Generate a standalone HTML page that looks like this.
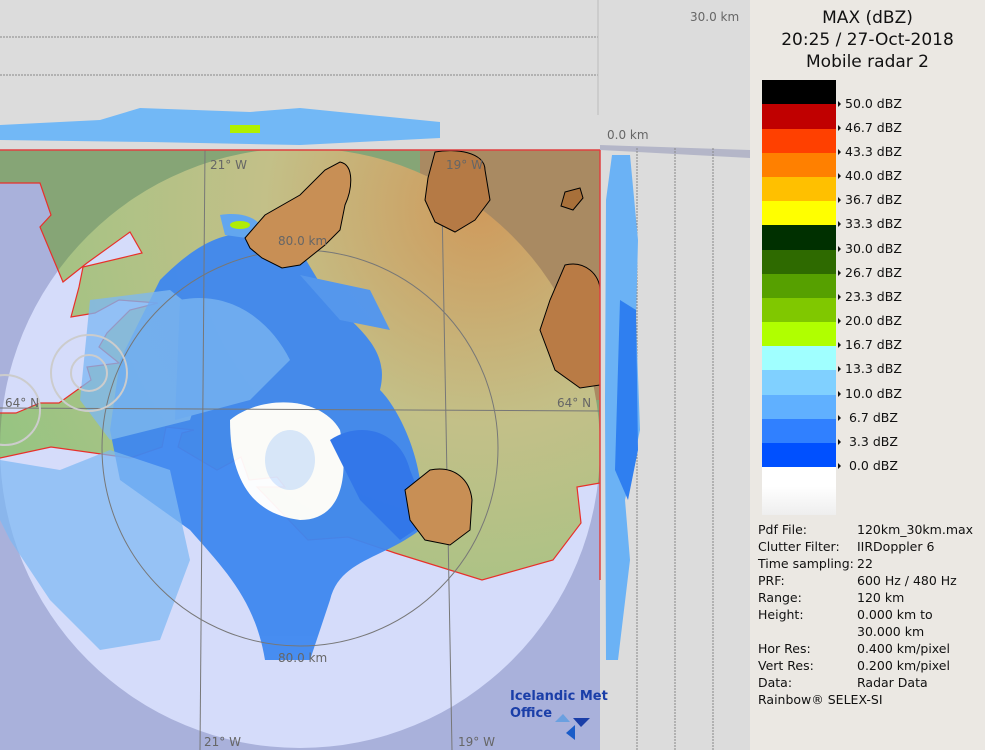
<!DOCTYPE html>
<html><head><style>
body{margin:0;width:985px;height:750px;overflow:hidden;background:#ebe8e2;font-family:"DejaVu Sans","Liberation Sans",sans-serif;position:relative}
.lg{position:absolute;left:750px;top:0;width:235px;height:750px;background:#ebe8e3;color:#111}
.title{position:absolute;left:0;width:235px;text-align:center;font-size:17px;line-height:22px;top:7px}
.bar{position:absolute;left:12px;width:74px}
.lab{position:absolute;left:95px;font-size:12.5px;white-space:pre}
.lab:before{content:"";position:absolute;left:-7px;top:5px;border-left:3px solid #111;border-top:3px solid transparent;border-bottom:3px solid transparent}
.inf{position:absolute;left:8px;font-size:12.5px;line-height:17px;top:521px}
.inf div{height:17px;white-space:nowrap}
.inf span{position:absolute;left:99px}
</style></head><body>
<svg width="750" height="750" style="position:absolute;left:0;top:0">
<defs>
<clipPath id="mr"><rect x="0" y="150" width="600" height="600"/></clipPath>
<clipPath id="land"><polygon id="lp" points="0,150 600,150 600,483 577,487 581,523 553,560 482,580 395,553 348,537 308,540 257,487 285,487 277,477 249,480 241,457 217,470 178,447 182,433 194,430 166,427 162,447 130,458 51,447 0,458 0,413 16,413 40,403 59,403 91,380 87,367 119,363 99,347 107,333 130,310 158,303 119,300 95,313 71,317 79,287 83,267 142,253 130,232 87,263 63,282 40,227 51,215 40,183 0,183"/></clipPath>
<radialGradient id="lg1" cx="0.8" cy="0.1" r="0.9"><stop offset="0" stop-color="#cf9a5c"/><stop offset="0.4" stop-color="#c3c088"/><stop offset="1" stop-color="#95c482"/></radialGradient>
</defs>
<rect width="750" height="750" fill="#a9b1db"/>
<rect x="0" y="0" width="600" height="150" fill="#dcdcdc"/>
<line x1="0" y1="37" x2="598" y2="37" stroke="#888" stroke-dasharray="2,1"/>
<line x1="0" y1="75" x2="598" y2="75" stroke="#888" stroke-dasharray="2,1"/>
<line x1="598" y1="0" x2="598" y2="115" stroke="#bbb"/>
<rect x="600" y="0" width="150" height="750" fill="#dcdcdc"/>
<polygon points="600,145 750,150 750,158 600,150" fill="#b4b6c8"/>
<line x1="637" y1="148" x2="637" y2="750" stroke="#888" stroke-dasharray="2,1"/>
<line x1="675" y1="148" x2="675" y2="750" stroke="#888" stroke-dasharray="2,1"/>
<line x1="713" y1="148" x2="713" y2="750" stroke="#888" stroke-dasharray="2,1"/>
<g clip-path="url(#mr)">
<rect x="0" y="150" width="600" height="600" fill="#a9b1db"/>
<circle cx="300" cy="448" r="300" fill="#d5dcfa"/>
<g clip-path="url(#land)">
<rect x="0" y="150" width="600" height="450" fill="#86a576"/>
<rect x="420" y="150" width="180" height="250" fill="#a98a62"/>
<circle cx="300" cy="448" r="300" fill="url(#lg1)"/>
</g>
<polyline points="600,483 577,487 581,523 553,560 482,580 395,553 348,537 308,540 257,487 285,487 277,477 249,480 241,457 217,470 178,447 182,433 194,430 166,427 162,447 130,458 51,447 0,458" fill="none" stroke="#e8302a" stroke-width="1.2"/>
<polyline points="0,413 16,413 40,403 59,403 91,380 87,367 119,363 99,347 107,333 130,310 158,303 119,300 95,313 71,317 79,287 83,267 142,253 130,232 87,263 63,282 40,227 51,215 40,183 0,183" fill="none" stroke="#e8302a" stroke-width="1.2"/>
<g opacity="0.95">
<path d="M160,280 C200,240 240,215 300,250 L330,300 C360,330 390,350 380,390 C400,410 430,470 420,530 C380,560 340,560 330,600 L310,660 L265,660 C255,600 225,570 190,530 L120,480 L110,430 L120,360Z" fill="#3f88f0"/>
<path d="M90,300 L170,290 L220,330 L190,420 L110,440 L80,400Z" fill="#7db8f4" opacity="0.8"/>
<path d="M180,300 C230,290 270,320 290,360 L250,400 L175,420 Z" fill="#6aaaf5"/>
<path d="M230,420 C260,395 320,395 340,430 C350,480 340,520 300,520 C260,515 230,490 230,420Z" fill="#ffffff"/>
<ellipse cx="290" cy="460" rx="25" ry="30" fill="#d9e9ff"/>
<path d="M0,460 L60,470 L110,450 L170,470 L190,560 L160,640 L100,650 L50,600 L10,540 L0,520Z" fill="#7eb8f3" opacity="0.75"/>
<path d="M330,440 C360,420 400,430 410,470 L430,520 L400,540 L360,500Z" fill="#2c74ef"/>
<path d="M300,275 L370,290 L390,330 L340,320Z" fill="#5096f2"/>
<path d="M220,215 C250,210 270,225 260,240 L225,235Z" fill="#5ea5f5"/>
<ellipse cx="240" cy="225" rx="10" ry="4" fill="#b0f000"/>
</g>
<circle cx="300" cy="448" r="198" fill="none" stroke="#777" stroke-width="1"/>
<line x1="205" y1="150" x2="200" y2="750" stroke="#777"/>
<line x1="441" y1="150" x2="452" y2="750" stroke="#777"/>
<line x1="0" y1="408" x2="600" y2="411" stroke="#777"/>
<circle cx="89" cy="373" r="38" fill="none" stroke="#ccc" stroke-width="2"/>
<circle cx="89" cy="373" r="18" fill="none" stroke="#ccc" stroke-width="2"/>
<circle cx="5" cy="410" r="35" fill="none" stroke="#ccc" stroke-width="2"/>
<path d="M340,162 C355,165 352,190 345,205 L340,230 L325,245 L300,265 L282,268 L262,258 L250,248 L245,238 L265,215 L300,195 L325,170Z" fill="#c88f55" stroke="#000" stroke-width="1"/>
<path d="M435,152 C455,148 485,152 485,170 L490,200 L475,220 L455,232 L435,222 L425,200 L428,178Z" fill="#b57a45" stroke="#000" stroke-width="1"/>
<path d="M565,265 C585,260 600,275 600,290 L600,385 L580,388 L555,370 L540,330 L550,300Z" fill="#b97b45" stroke="#000" stroke-width="1"/>
<path d="M430,470 C455,465 470,480 472,500 L470,530 L450,545 L425,540 L410,520 L405,490Z" fill="#c88f55" stroke="#000" stroke-width="1"/>
<path d="M565,192 l15,-4 l3,10 l-10,12 l-12,-4Z" fill="#a8703a" stroke="#000"/>
</g>
<line x1="0" y1="150" x2="600" y2="150" stroke="#e04040" stroke-width="1.5"/>
<line x1="600" y1="150" x2="600" y2="580" stroke="#e04040" stroke-width="1.5"/>
<path d="M0,125 L100,120 L140,108 L250,112 L300,108 L440,122 L440,138 L300,145 L150,142 L0,140Z" fill="#72b8f6"/>
<rect x="230" y="125" width="30" height="8" fill="#b0f000"/>
<path d="M612,155 L630,155 L638,240 L636,320 L640,430 L625,500 L630,560 L618,660 L606,660 L605,400 L606,200Z" fill="#6bb2f5"/>
<path d="M620,300 L636,310 L638,450 L628,500 L615,470Z" fill="#2f7ff0"/>
<g font-size="12" fill="#666" font-family="DejaVu Sans,sans-serif">
<text x="690" y="21">30.0 km</text>
<text x="607" y="139">0.0 km</text>
<text x="210" y="169">21° W</text>
<text x="446" y="169">19° W</text>
<text x="278" y="245">80.0 km</text>
<text x="278" y="662">80.0 km</text>
<text x="557" y="407">64° N</text>
<text x="5" y="407">64° N</text>
<text x="204" y="746">21° W</text>
<text x="458" y="746">19° W</text>
</g>
<text x="510" y="700" font-size="13" font-weight="bold" fill="#1a3ea8" font-family="DejaVu Sans,sans-serif">Icelandic Met</text>
<text x="510" y="717" font-size="13" font-weight="bold" fill="#1a3ea8" font-family="DejaVu Sans,sans-serif">Office</text>
<polygon points="573,718 590,718 581,727" fill="#1a3ea8"/>
<polygon points="555,722 563,714 570,722" fill="#6aa0e0"/>
<polygon points="575,725 575,740 566,733" fill="#1a5cc8"/>
</svg>
<div class="lg">
<div class="title">MAX (dBZ)<br>20:25 / 27-Oct-2018<br>Mobile radar 2</div>
<div class="bar" style="top:80px;height:24px;background:#000"></div>
<div class="bar" style="top:104px;height:25px;background:#c00000"></div>
<div class="bar" style="top:129px;height:24px;background:#ff4000"></div>
<div class="bar" style="top:153px;height:24px;background:#ff8000"></div>
<div class="bar" style="top:177px;height:24px;background:#ffc000"></div>
<div class="bar" style="top:201px;height:24px;background:#ffff00"></div>
<div class="bar" style="top:225px;height:25px;background:#003000"></div>
<div class="bar" style="top:250px;height:24px;background:#2e6a00"></div>
<div class="bar" style="top:274px;height:24px;background:#56a000"></div>
<div class="bar" style="top:298px;height:24px;background:#80c800"></div>
<div class="bar" style="top:322px;height:24px;background:#b0ff00"></div>
<div class="bar" style="top:346px;height:24px;background:#a0ffff"></div>
<div class="bar" style="top:370px;height:25px;background:#80d0ff"></div>
<div class="bar" style="top:395px;height:24px;background:#60b0ff"></div>
<div class="bar" style="top:419px;height:24px;background:#3080ff"></div>
<div class="bar" style="top:443px;height:24px;background:#0050ff"></div>
<div class="bar" style="top:467px;height:48px;background:linear-gradient(#fff 0,#fff 40%,#eee 100%)"></div>
<div class="lab" style="top:96px">50.0 dBZ</div>
<div class="lab" style="top:120px">46.7 dBZ</div>
<div class="lab" style="top:144px">43.3 dBZ</div>
<div class="lab" style="top:168px">40.0 dBZ</div>
<div class="lab" style="top:192px">36.7 dBZ</div>
<div class="lab" style="top:216px">33.3 dBZ</div>
<div class="lab" style="top:241px">30.0 dBZ</div>
<div class="lab" style="top:265px">26.7 dBZ</div>
<div class="lab" style="top:289px">23.3 dBZ</div>
<div class="lab" style="top:313px">20.0 dBZ</div>
<div class="lab" style="top:337px">16.7 dBZ</div>
<div class="lab" style="top:361px">13.3 dBZ</div>
<div class="lab" style="top:386px">10.0 dBZ</div>
<div class="lab" style="top:410px"> 6.7 dBZ</div>
<div class="lab" style="top:434px"> 3.3 dBZ</div>
<div class="lab" style="top:458px"> 0.0 dBZ</div>
<div class="inf">
<div>Pdf File:<span>120km_30km.max</span></div>
<div>Clutter Filter:<span>IIRDoppler 6</span></div>
<div>Time sampling:<span>22</span></div>
<div>PRF:<span>600 Hz / 480 Hz</span></div>
<div>Range:<span>120 km</span></div>
<div>Height:<span>0.000 km to</span></div>
<div><span>30.000 km</span></div>
<div>Hor Res:<span>0.400 km/pixel</span></div>
<div>Vert Res:<span>0.200 km/pixel</span></div>
<div>Data:<span>Radar Data</span></div>
<div>Rainbow® SELEX-SI</div>
</div>
</div>
</body></html>
